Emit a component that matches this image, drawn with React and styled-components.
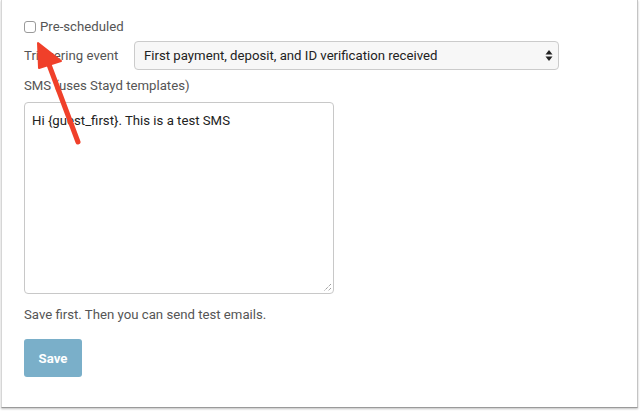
import React from 'react'
import styled, { createGlobalStyle } from 'styled-components'

const GlobalStyle = createGlobalStyle`
  html, body {
    margin: 0;
    padding: 0;
    background: #fff;
  }
  body {
    font-family: Roboto, "Liberation Sans", Arial, sans-serif;
  }
`

const Page = styled.div`
  position: relative;
  width: 640px;
  height: 411px;
  padding: 0 2px 3px 1px;
  box-sizing: border-box;
`

const Panel = styled.div`
  height: 100%;
  box-sizing: border-box;
  background: #fff;
  border-left: 1px solid #d6d6d6;
  border-right: 1px solid #c4c4c4;
  border-bottom: 1px solid #9a9a9a;
  box-shadow: 0 1px 2px rgba(0, 0, 0, 0.25);
  padding: 18px 0 0 22px;
  display: flex;
  flex-direction: column;
  align-items: flex-start;
`

const CheckRow = styled.label`
  display: flex;
  align-items: center;
  gap: 4px;
  height: 17px;
  font-size: 13.2px;
  color: #555;
`

const Box = styled.input`
  width: 12px;
  height: 12px;
  margin: 1px 0 0 0;
  appearance: none;
  border: 1px solid #9a9a9a;
  border-radius: 3px;
  background: #fff;
  box-sizing: border-box;
`

const FieldRow = styled.div`
  display: flex;
  align-items: center;
  margin-top: 6px;
`

const Label = styled.span`
  font-size: 13.2px;
  color: #555;
  width: 110px;
`

const Select = styled.div`
  position: relative;
  width: 425px;
  height: 29px;
  box-sizing: border-box;
  border: 1px solid #cbcbcb;
  border-radius: 4px;
  background: #f7f7f7;
  font-size: 13.2px;
  color: #222;
  display: flex;
  align-items: center;
  padding-left: 9px;
`

const Arrows = styled.svg`
  position: absolute;
  right: 5px;
  top: 8px;
`

const BlockLabel = styled.div`
  font-size: 13.2px;
  color: #555;
  margin-top: 8px;
`

const TextArea = styled.div`
  position: relative;
  margin-top: 9px;
  width: 310px;
  height: 192px;
  box-sizing: border-box;
  border: 1px solid #c8c8c8;
  border-radius: 4px;
  padding: 10px 7px;
  font-size: 13.2px;
  color: #222;
`

const Grip = styled.svg`
  position: absolute;
  right: 1px;
  bottom: 1px;
`

const Help = styled.div`
  font-size: 13.2px;
  color: #555;
  margin-top: 13px;
`

const Button = styled.button`
  margin-top: 17px;
  width: 58px;
  height: 38px;
  border: none;
  border-radius: 3px;
  background: #7aafc9;
  color: #fff;
  font-family: Roboto, "Liberation Sans", Arial, sans-serif;
  font-size: 13.2px;
  font-weight: 700;
`

const Pointer = styled.svg`
  position: absolute;
  left: 0;
  top: 0;
  pointer-events: none;
`

export default function App() {
  return (
    <>
      <GlobalStyle />
      <Page>
        <Panel>
          <CheckRow>
            <Box type="checkbox" />
            Pre-scheduled
          </CheckRow>
          <FieldRow>
            <Label>Triggering event</Label>
            <Select>
              First payment, deposit, and ID verification received
              <Arrows width="8" height="11" viewBox="0 0 8 11">
                <path d="M4 0 L7.5 4.5 L0.5 4.5 Z" fill="#222" />
                <path d="M4 11 L7.5 6.5 L0.5 6.5 Z" fill="#222" />
              </Arrows>
            </Select>
          </FieldRow>
          <BlockLabel>SMS (uses Stayd templates)</BlockLabel>
          <TextArea>
            Hi {'{guest_first}'}. This is a test SMS
            <Grip width="9" height="9" viewBox="0 0 9 9">
              <path d="M8 1 L1 8 M8 5 L5 8" stroke="#777" strokeWidth="1" strokeDasharray="1 1" />
            </Grip>
          </TextArea>
          <Help>Save first. Then you can send test emails.</Help>
          <Button>Save</Button>
        </Panel>
        <Pointer width="640" height="411" viewBox="0 0 640 411">
          <line x1="78" y1="142" x2="48" y2="62" stroke="#f0402a" strokeWidth="5" strokeLinecap="round" />
          <path d="M38 43 L39 68 L61 61 Z" fill="#f0402a" stroke="#f0402a" strokeWidth="2" strokeLinejoin="round" />
        </Pointer>
      </Page>
    </>
  )
}
